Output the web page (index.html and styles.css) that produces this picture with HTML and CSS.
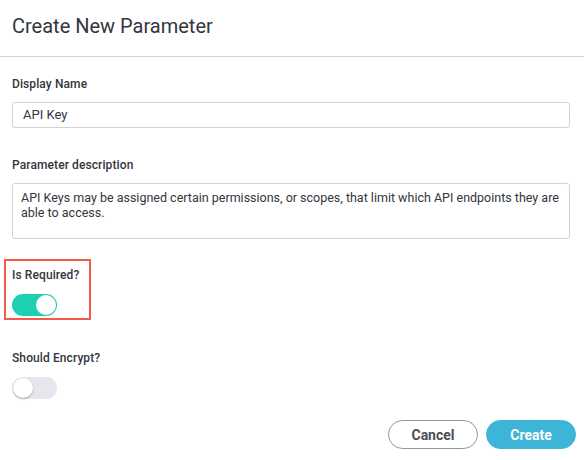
FILE: index.html
```html
<!DOCTYPE html>
<html>
<head>
<meta charset="utf-8">
<link rel="stylesheet" href="styles.css">
</head>
<body>
<div class="dialog">
  <div class="header">Create New Parameter</div>
  <div class="body">
    <div class="field">
      <div class="label">Display Name</div>
      <div class="input">API Key</div>
    </div>
    <div class="field field-desc">
      <div class="label">Parameter description</div>
      <div class="textarea">API Keys may be assigned certain permissions, or scopes, that limit which API endpoints they are able to access.</div>
    </div>
    <div class="toggle-field highlight">
      <div class="label">Is Required?</div>
      <div class="toggle on"><span class="knob"></span></div>
    </div>
    <div class="toggle-field encrypt">
      <div class="label">Should Encrypt?</div>
      <div class="toggle"><span class="knob"></span></div>
    </div>
    <div class="actions">
      <button class="btn btn-cancel">Cancel</button>
      <button class="btn btn-create">Create</button>
    </div>
  </div>
</div>
</body>
</html>
```
FILE: styles.css
```css
html, body {
  margin: 0;
  padding: 0;
  background: #fff;
}
body {
  font-family: Roboto, "Liberation Sans", sans-serif;
  color: #33363d;
  width: 584px;
  height: 460px;
  overflow: hidden;
}
.header {
  font-size: 20px;
  line-height: 24px;
  padding: 14px 12px 18px;
  border-bottom: 1px solid #d2d2d4;
  color: #33363d;
}
.body {
  padding: 19px 14px 0 12px;
  display: flex;
  flex-direction: column;
}
.label {
  font-size: 12px;
  font-weight: 500;
  line-height: 16px;
  color: #33363d;
  letter-spacing: 0.1px;
}
.input {
  margin-top: 10px;
  height: 24px;
  border: 1px solid #d0d2d6;
  border-radius: 3px;
  font-size: 13px;
  line-height: 24px;
  padding: 0 10px;
}
.field-desc {
  margin-top: 29px;
}
.textarea {
  margin-top: 10px;
  border: 1px solid #d0d2d6;
  border-radius: 3px;
  font-size: 12.5px;
  line-height: 15px;
  padding: 6px 8px 0 8px;
  box-sizing: border-box;
  height: 56px;
}
.toggle-field {
  display: flex;
  flex-direction: column;
  align-items: flex-start;
  gap: 11px;
}
.highlight {
  align-self: flex-start;
  box-sizing: border-box;
  width: 87px;
  margin-top: 20px;
  margin-left: -8px;
  padding: 6px 4px 2px 6px;
  border: 2px solid #f45a4c;
}
.encrypt {
  margin-top: 30px;
}
.toggle {
  width: 45px;
  height: 22px;
  border-radius: 11px;
  background: #e6e7ec;
  position: relative;
}
.toggle .knob {
  position: absolute;
  top: 1px;
  left: 1px;
  width: 20px;
  height: 20px;
  border-radius: 50%;
  background: #fff;
  box-shadow: 0 1px 2px rgba(0,0,0,0.3);
}
.toggle.on {
  background: #1cd0b1;
}
.toggle.on .knob {
  left: 24px;
  box-shadow: none;
}
.actions {
  display: flex;
  justify-content: flex-end;
  gap: 8px;
  margin-top: 21px;
  margin-right: -6px;
}
.btn {
  font-family: Roboto, "Liberation Sans", sans-serif;
  font-size: 14px;
  font-weight: 700;
  height: 29px;
  width: 90px;
  border-radius: 15px;
  padding: 0;
  cursor: pointer;
}
.btn-cancel {
  background: #fff;
  border: 1px solid #8e96a3;
  color: #4b4f57;
}
.btn-create {
  background: #3db5d8;
  border: 1px solid #3db5d8;
  color: #fff;
}
```
